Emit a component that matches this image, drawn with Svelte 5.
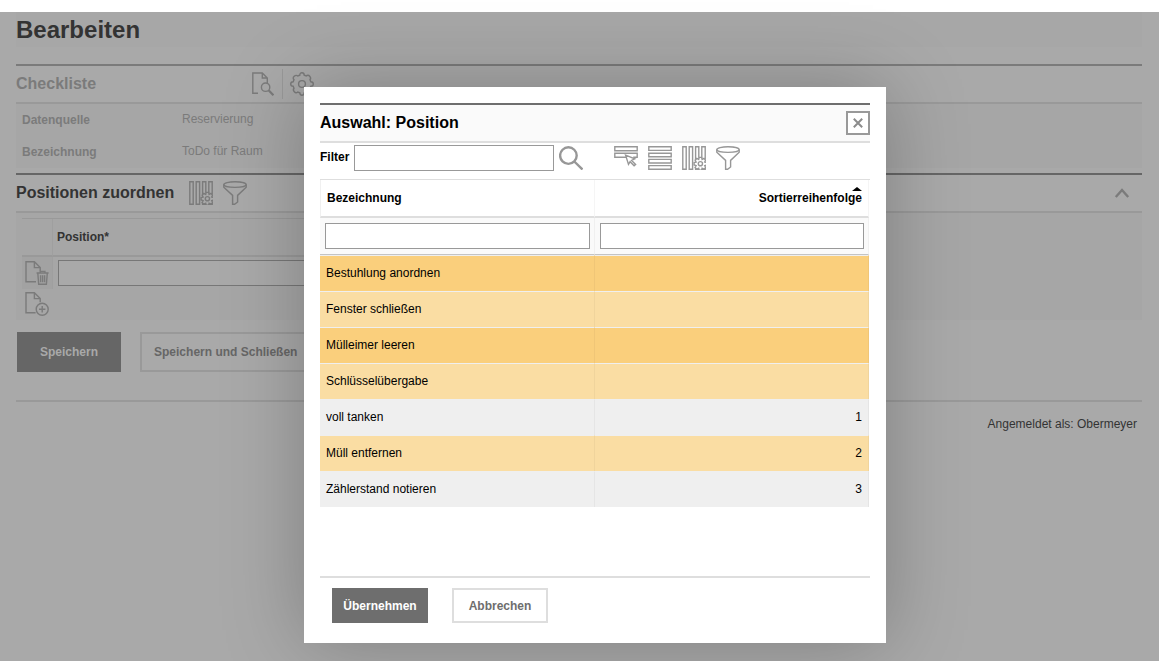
<script>
  let position = '';
  let filter = '';
  let filterBezeichnung = '';
  let filterSortierung = '';

  let positionen = [
    { name: 'Bestuhlung anordnen', folge: '', status: 'aktiv' },
    { name: 'Fenster schließen', folge: '', status: 'gewaehlt' },
    { name: 'Mülleimer leeren', folge: '', status: 'aktiv' },
    { name: 'Schlüsselübergabe', folge: '', status: 'gewaehlt' },
    { name: 'voll tanken', folge: '1', status: '' },
    { name: 'Müll entfernen', folge: '2', status: 'gewaehlt' },
    { name: 'Zählerstand notieren', folge: '3', status: '' }
  ];
</script>

{#snippet spaltenIcon()}
  <svg class="icon" viewBox="0 0 24 24">
    <path d="M.8.8h3.4v22.4H.8zM7.2.8h3.4v22.4H7.2zM13.6 13V.8h3.2v11M19.8 12V.8h3.4V13M13.6 21v2.2h9.6V21" />
    <path class="flaeche" d="m17.200 11.400h2.400l.5 2 1.900-1 1.700 1.800-1 1.800 2 .6v2.400l-2 .6 1 1.900-1.700 1.700-1.900-1-.5 2h-2.400l-.5-2-1.900 1-1.700-1.700 1-1.900-2-.6v-2.400l2-.6-1-1.800 1.700-1.800 1.900 1z" />
    <circle cx="18.4" cy="17.7" r="2.1" />
  </svg>
{/snippet}

{#snippet trichterIcon()}
  <svg class="icon" viewBox="0 0 24 24">
    <ellipse cx="12" cy="3.6" rx="11.2" ry="2.8" />
    <path d="M.8 3.6v2.6l8.8 8.2v8.8h2l3-2.2v-6.6l8.6-8.2V3.6" />
  </svg>
{/snippet}

<div class="seite">
  <main>
    <h1>Bearbeiten</h1>

    <section class="checkliste">
      <header>
        <h2>Checkliste</h2>
        <div class="werkzeuge">
          <button class="symbol" aria-label="Vorschau">
            <svg class="icon" viewBox="0 0 24 24">
              <path d="M8 21.2H2.8V1h9.5l5 5v5M12.3 1v5h5" />
              <circle cx="15.6" cy="15.2" r="4.2" />
              <path class="dick" d="m18.8 18.4 4.6 4.8" />
            </svg>
          </button>
          <button class="symbol getrennt" aria-label="Einstellungen">
            <svg class="icon" viewBox="0 0 24 24">
              <path d="M9.8 3.2Q9.8.8 12 .8t2.2 2.4l2 .8Q18 2.300 19.700 4.200T20 7.700l.8 2Q23.300 9.800 23.300 12t-2.400 2.200l-.9 2.100Q21.700 18 19.800 19.700T16.200 20l-2 .8Q14.200 23.200 12 23.200t-2.200-2.400l-2-.8Q6 21.700 4.300 19.800T4 16.300l-.8-2Q.7 14.200.7 12t2.500-2.200l.8-2.100Q2.300 6 4.200 4.300T7.800 4z" />
              <circle cx="12" cy="12" r="3.4" />
            </svg>
          </button>
        </div>
      </header>
      <dl>
        <dt>Datenquelle</dt>
        <dd>Reservierung</dd>
        <dt>Bezeichnung</dt>
        <dd>ToDo für Raum</dd>
      </dl>
    </section>

    <section class="zuordnung">
      <header>
        <h2>Positionen zuordnen</h2>
        <div class="werkzeuge">
          <button class="symbol" aria-label="Spalten">{@render spaltenIcon()}</button>
          <button class="symbol" aria-label="Filtern">{@render trichterIcon()}</button>
        </div>
        <button class="symbol einklappen" aria-label="Einklappen">
          <svg class="icon" viewBox="0 0 24 24">
            <path class="pfeil" d="m5.800 16 6.200-7 6.200 7" />
          </svg>
        </button>
      </header>
      <div class="inhalt">
        <table>
          <thead>
            <tr>
              <th class="aktion"></th>
              <th><label for="position">Position*</label></th>
            </tr>
          </thead>
          <tbody>
            <tr>
              <td class="aktion">
                <button class="symbol" aria-label="Zeile löschen">
                  <svg class="icon" viewBox="0 0 24 24">
                    <path d="M11 20.800H1V.8h8.400l5.800 5.800v3.600M9.400.8v5.800h5.800" />
                    <path d="M11.600 12h12M15.300 12v-1.600h4.600V12M12.800 12l.9 11.300h7.700L22.300 12M15.600 14.200v7M17.600 14.200v7M19.600 14.200v7" />
                  </svg>
                </button>
              </td>
              <td><input id="position" type="text" bind:value={position}></td>
            </tr>
          </tbody>
        </table>
        <button class="symbol neu" aria-label="Zeile hinzufügen">
          <svg class="icon" viewBox="0 0 24 24">
            <path d="M10.600 20.800H1V.8h8.400l5.800 5.800v3.600M9.400.8v5.800h5.800" />
            <circle cx="17.200" cy="17.200" r="6" />
            <path d="M17.200 14v6.400M14 17.200h6.400" />
          </svg>
        </button>
      </div>
    </section>

    <div class="knoepfe">
      <button class="knopf primaer">Speichern</button>
      <button class="knopf">Speichern und Schließen</button>
    </div>

    <footer>Angemeldet als: Obermeyer</footer>
  </main>

  <div class="overlay">
    <div class="dialog" role="dialog" aria-modal="true" aria-labelledby="dialog-titel">
      <header>
        <h2 id="dialog-titel">Auswahl: Position</h2>
        <button class="schliessen" aria-label="Schließen">
          <svg viewBox="0 0 10 10"><path d="m.8.8 8.400 8.400M9.200.8.8 9.200" /></svg>
        </button>
      </header>

      <div class="filterleiste">
        <label for="filter">Filter</label>
        <input id="filter" type="text" bind:value={filter}>
        <button class="symbol" aria-label="Suchen">
          <svg class="icon" viewBox="0 0 24 24">
            <circle class="lupe" cx="9.400" cy="9.600" r="8.300" />
            <path class="lupe" d="m15.300 15.500 8.200 8" />
          </svg>
        </button>
        <div class="werkzeuge">
          <button class="symbol" aria-label="Zeile auswählen">
            <svg class="icon" viewBox="0 0 24 24">
              <path d="M.8.8h22.400v4H.8zM12 11.200H.8v-4h22.400v4h-4" />
              <path class="flaeche" d="m11.600 9.200 9.200 3.600-3.200 1.600 4 4-1.500 1.300-4-4-1.600 2.700z" />
            </svg>
          </button>
          <button class="symbol" aria-label="Alle auswählen">
            <svg class="icon" viewBox="0 0 24 24">
              <path d="M.8.8h22.400v3.600H.8zM.8 7.200h22.400v3.600H.8zM.8 13.400h22.400V17H.8zM.8 19.600h22.400v3.600H.8z" />
            </svg>
          </button>
          <button class="symbol" aria-label="Spalten">{@render spaltenIcon()}</button>
          <button class="symbol" aria-label="Filtern">{@render trichterIcon()}</button>
        </div>
      </div>

      <div class="liste">
        <table>
          <thead>
            <tr class="titel">
              <th>Bezeichnung</th>
              <th class="zahl"><span class="sortiert">Sortierreihenfolge</span></th>
            </tr>
            <tr class="suche">
              <td><input type="text" aria-label="Bezeichnung filtern" bind:value={filterBezeichnung}></td>
              <td><input type="text" aria-label="Sortierreihenfolge filtern" bind:value={filterSortierung}></td>
            </tr>
          </thead>
          <tbody>
            {#each positionen as eintrag}
              <tr class={eintrag.status}>
                <td>{eintrag.name}</td>
                <td class="zahl">{eintrag.folge}</td>
              </tr>
            {/each}
          </tbody>
        </table>
      </div>

      <div class="dialog-knoepfe">
        <button class="knopf primaer">Übernehmen</button>
        <button class="knopf">Abbrechen</button>
      </div>
    </div>
  </div>
</div>

<style>
  :global(body) {
    background: #fff;
  }

  .seite {
    position: relative;
    box-sizing: border-box;
    min-height: 100vh;
    border-top: 12px solid #fff;
    background: #a9a9a9;
    font: 12px/16px "Liberation Sans", Arial, sans-serif;
    color: #333;
  }

  main {
    padding: 0 17px 16px 16px;
  }

  h1, h2, dl, dd {
    margin: 0;
  }

  h1 {
    margin-bottom: 17px;
    background: #a7a7a7;
    font-size: 24px;
    line-height: 35px;
  }

  h2 {
    font-size: 16px;
    line-height: 20px;
  }

  header {
    display: flex;
    align-items: center;
    box-sizing: border-box;
    height: 40px;
    border-top: 2px solid #666;
    border-bottom: 2px solid #999;
  }

  input {
    box-sizing: border-box;
    height: 26px;
    padding: 0 4px;
    border: 1px solid #999;
    border-radius: 0;
    background: #fff;
    font: inherit;
  }

  button {
    padding: 0;
    border: 0;
    background: none;
    font: inherit;
    cursor: pointer;
  }

  table {
    border-collapse: separate;
    border-spacing: 0;
  }

  th, td {
    box-sizing: border-box;
    padding: 0;
    text-align: left;
  }

  /* Symbole */
  .symbol {
    display: block;
    width: 24px;
    height: 24px;
    color: #7b7b7b;
    --grund: #a9a9a9;
  }

  .icon {
    display: block;
    width: 24px;
    height: 24px;
    fill: none;
    stroke: currentColor;
    stroke-width: 1.4;
  }

  .icon .flaeche {
    fill: var(--grund);
  }

  .icon .dick {
    stroke-width: 2.2;
  }

  .icon .pfeil, .icon .lupe {
    stroke-width: 2.4;
  }

  .werkzeuge {
    display: flex;
    align-items: center;
    gap: 10px;
  }

  /* Checkliste */
  .checkliste {
    margin-bottom: 5px;
    color: #7b7b7b;
  }

  .checkliste header {
    border-top-color: #7b7b7b;
  }

  .checkliste .werkzeuge {
    gap: 8px;
    margin-left: 154px;
  }

  .getrennt {
    box-sizing: content-box;
    padding: 3px 0 3px 7px;
    border-left: 1px solid #999;
  }

  dl {
    display: grid;
    grid-template-columns: 160px 1fr;
    row-gap: 16px;
    padding: 8px 6px;
    background: #a6a6a6;
  }

  dt {
    font-weight: bold;
  }

  dd {
    line-height: 14px;
  }

  /* Positionen */
  .zuordnung .werkzeuge {
    margin-left: 15px;
  }

  .einklappen {
    margin-left: auto;
    margin-right: 8px;
  }

  .inhalt {
    padding: 5px 6px 4px;
    background: #a6a6a6;
  }

  .inhalt table {
    width: 50%;
    border-top: 1px solid #999;
  }

  .inhalt th {
    height: 38px;
    padding-left: 4px;
    border-bottom: 2px solid #999;
  }

  .inhalt td {
    height: 32px;
    padding-left: 5px;
  }

  .inhalt .aktion {
    width: 31px;
    padding-left: 3px;
    border-right: 1px solid #9f9f9f;
  }

  .inhalt td.aktion {
    background: #a2a2a2;
  }

  .inhalt input {
    display: block;
    width: 80%;
    border-color: #777;
    background: #a9a9a9;
  }

  .neu {
    margin: 3px 0 0 3px;
  }

  /* Knöpfe */
  .knoepfe {
    display: flex;
    gap: 19px;
    margin: 12px 0 28px 1px;
  }

  .knopf {
    box-sizing: border-box;
    height: 40px;
    padding: 0 12px;
    border: 2px solid #999;
    color: #666;
    font-weight: bold;
  }

  .knopf.primaer {
    padding: 0 21px;
    border-color: #666;
    background: #666;
    color: #a9a9a9;
  }

  footer {
    padding: 14px 5px;
    border-top: 2px solid #999;
    text-align: right;
  }

  /* Dialog */
  .overlay {
    position: absolute;
    inset: 0;
    display: flex;
    justify-content: center;
    align-items: flex-start;
    padding: 75px 0 18px 31px;
  }

  .dialog {
    box-sizing: border-box;
    width: 582px;
    padding: 16px 16px 20px;
    background: #fff;
    box-shadow: 0 0 75px rgba(0, 0, 0, 0.25);
    color: #000;
  }

  .dialog header {
    justify-content: space-between;
    border-top-color: #6e6e6e;
    border-bottom-color: #dedede;
    background: #fafafa;
  }

  .schliessen {
    display: grid;
    place-items: center;
    box-sizing: border-box;
    width: 24px;
    height: 24px;
    border: 2px solid #999;
    background: #fff;
  }

  .schliessen svg {
    width: 10px;
    height: 10px;
    fill: none;
    stroke: #8c8c8c;
    stroke-width: 2;
  }

  .dialog .symbol {
    color: #979797;
    --grund: #fff;
  }

  .filterleiste {
    display: flex;
    align-items: center;
    height: 30px;
    padding-bottom: 6px;
  }

  .filterleiste label {
    width: 34px;
    padding-bottom: 2px;
    font-weight: bold;
  }

  .filterleiste input {
    width: 200px;
    margin-right: 5px;
  }

  .filterleiste .werkzeuge {
    margin-left: 31px;
  }

  .liste {
    min-height: 396px;
    border-top: 1px solid #dedede;
    border-bottom: 2px solid #dedede;
  }

  .liste table {
    width: calc(100% - 1px);
    table-layout: fixed;
  }

  .liste th, .liste td {
    border-right: 1px solid rgba(0, 0, 0, 0.04);
  }

  .titel th {
    height: 38px;
    padding: 0 6px;
    border-bottom: 2px solid #dedede;
  }

  .titel th:first-child {
    border-left: 1px solid #f0f0f0;
  }

  .sortiert {
    position: relative;
  }

  .sortiert::after {
    content: "";
    position: absolute;
    right: 0;
    top: -4px;
    border: 5px solid transparent;
    border-top: 0;
    border-bottom: 4px solid #000;
  }

  .suche td {
    height: 37px;
    padding: 0 4px 0 5px;
    border-bottom: 1px solid #c4c4c4;
    background: #fafafa;
  }

  .suche input {
    display: block;
    width: 100%;
  }

  .liste tbody td {
    height: 36px;
    padding: 0 6px 2px;
    border-top: 1px solid #efefef;
    background: #efefef;
  }

  .liste .zahl {
    text-align: right;
  }

  .liste .gewaehlt td {
    background: #fadda3;
    background-clip: border-box;
  }

  .liste .aktiv td {
    background: #facf7c;
  }

  .dialog-knoepfe {
    display: flex;
    gap: 24px;
    padding: 10px 12px 0;
  }

  .dialog .knopf {
    width: 96px;
    height: 35px;
    padding: 0;
    border-color: #dedede;
    color: #6e6e6e;
  }

  .dialog .knopf.primaer {
    border-color: #6e6e6e;
    background: #6e6e6e;
    color: #fff;
  }
</style>
